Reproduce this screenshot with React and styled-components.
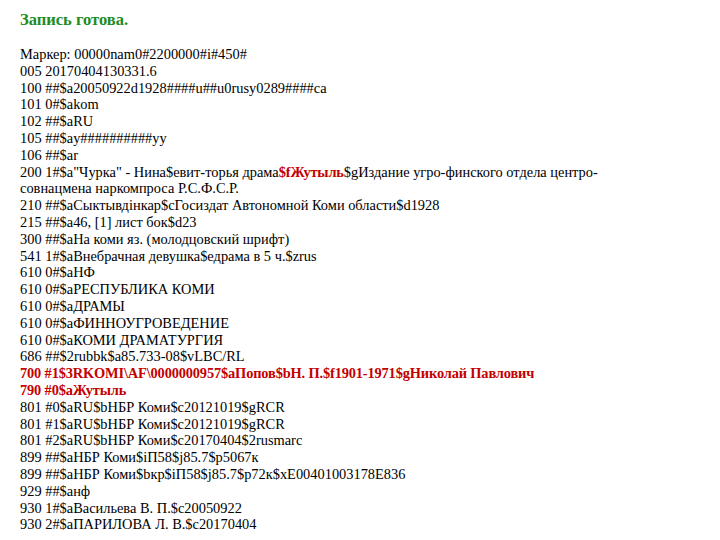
import React from "react";
import styled, { createGlobalStyle } from "styled-components";

const GlobalStyle = createGlobalStyle`
  html, body {
    margin: 0;
    padding: 0;
    background: #ffffff;
  }
`;

const records = [
  [{ t: "005 20170404130331.6" }],
  [{ t: "100 ##$a20050922d1928####u##u0rusy0289####ca" }],
  [{ t: "101 0#$akom" }],
  [{ t: "102 ##$aRU" }],
  [{ t: "105 ##$ay##########yy" }],
  [{ t: "106 ##$ar" }],
  [
    { t: "200 1#$a\"Чурка\" - Нина$евит-торья драма" },
    { t: "$fЖутыль", hl: true },
    { t: "$gИздание угро-финского отдела центро-совнацмена наркомпроса Р.С.Ф.С.Р." },
  ],
  [{ t: "210 ##$aСыктывдінкар$cГосиздат Автономной Коми области$d1928" }],
  [{ t: "215 ##$a46, [1] лист бок$d23" }],
  [{ t: "300 ##$aНа коми яз. (молодцовский шрифт)" }],
  [{ t: "541 1#$aВнебрачная девушка$едрама в 5 ч.$zrus" }],
  [{ t: "610 0#$aНФ" }],
  [{ t: "610 0#$aРЕСПУБЛИКА КОМИ" }],
  [{ t: "610 0#$aДРАМЫ" }],
  [{ t: "610 0#$aФИННОУГРОВЕДЕНИЕ" }],
  [{ t: "610 0#$aКОМИ ДРАМАТУРГИЯ" }],
  [{ t: "686 ##$2rubbk$a85.733-08$vLBC/RL" }],
  [{ t: "700 #1$3RKOMI\\AF\\0000000957$aПопов$bН. П.$f1901-1971$gНиколай Павлович", hl: true }],
  [{ t: "790 #0$aЖутыль", hl: true }],
  [{ t: "801 #0$aRU$bНБР Коми$c20121019$gRCR" }],
  [{ t: "801 #1$aRU$bНБР Коми$c20121019$gRCR" }],
  [{ t: "801 #2$aRU$bНБР Коми$c20170404$2rusmarc" }],
  [{ t: "899 ##$aНБР Коми$iП58$j85.7$p5067к" }],
  [{ t: "899 ##$aНБР Коми$bкр$iП58$j85.7$p72к$xE00401003178E836" }],
  [{ t: "929 ##$aнф" }],
  [{ t: "930 1#$aВасильева В. П.$c20050922" }],
  [{ t: "930 2#$aПАРИЛОВА Л. В.$c20170404" }],
];

const Page = styled.div`
  padding: 11px 20px 0 20px;
  font-family: "Liberation Serif", "Times New Roman", Times, serif;
  color: #000000;
`;

const Status = styled.div`
  font-size: 16.5px;
  font-weight: bold;
  color: #1e8c1e;
  line-height: 18px;
  margin-bottom: 17px;
`;

const Listing = styled.div`
  width: 610px;
  font-size: 14.4px;
  line-height: 16.8px;
`;

const Line = styled.div``;

const Mark = styled.span`
  color: #c40000;
  font-weight: bold;
  letter-spacing: -0.15px;
`;

export default function App() {
  return (
    <>
      <GlobalStyle />
      <Page>
        <Status>Запись готова.</Status>
        <Listing>
          <Line>Маркер: 00000nam0#2200000#i#450#</Line>
          {records.map((parts, i) => (
            <Line key={i}>
              {parts.map((p, j) =>
                p.hl ? <Mark key={j}>{p.t}</Mark> : <span key={j}>{p.t}</span>
              )}
            </Line>
          ))}
        </Listing>
      </Page>
    </>
  );
}
